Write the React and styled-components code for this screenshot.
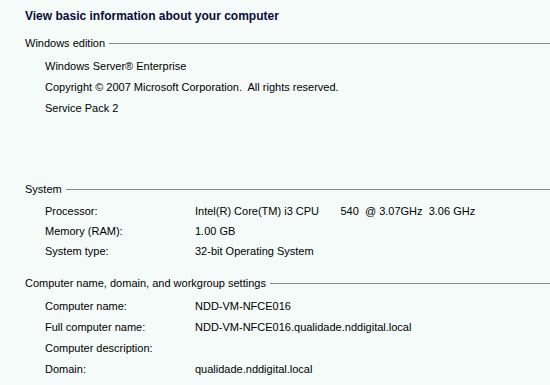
import React from 'react';
import styled, { createGlobalStyle } from 'styled-components';

const GlobalStyle = createGlobalStyle`
  html, body {
    margin: 0;
    padding: 0;
    background: #f5fbf9;
  }
  body {
    font-family: Tahoma, "Liberation Sans", Arial, sans-serif;
    font-size: 11px;
    color: #000;
  }
`;

const Page = styled.div`
  width: 550px;
  height: 385px;
  overflow: hidden;
  padding: 8px 0 0 25px;
  box-sizing: border-box;
`;

const Title = styled.h1`
  margin: 0 0 9px;
  font-size: 12px;
  line-height: 16px;
  font-weight: bold;
  color: #0a0a3c;
`;

const Section = styled.section`
  margin-bottom: ${(p) => p.$gap || '9px'};
  min-height: ${(p) => p.$minHeight || 'auto'};
`;

const Heading = styled.div`
  display: flex;
  align-items: center;
  height: 20px;
  line-height: 20px;
  white-space: nowrap;

  &::after {
    content: '';
    flex: 1;
    height: 1px;
    margin-left: 4px;
    background: #8a8a8a;
  }
`;

const Rows = styled.div`
  padding: 2px 0 0 20px;
  display: grid;
  grid-template-columns: 150px 1fr;
  grid-auto-rows: ${(p) => p.$rowHeight || '21px'};
  align-items: center;
`;

const Label = styled.div`
  white-space: nowrap;
`;

const Value = styled.div`
  white-space: pre;
`;

const Line = styled.div`
  grid-column: 1 / -1;
  white-space: pre;
`;

const system = [
  ['Processor:', 'Intel(R) Core(TM) i3 CPU       540  @ 3.07GHz  3.06 GHz'],
  ['Memory (RAM):', '1.00 GB'],
  ['System type:', '32-bit Operating System'],
];

const naming = [
  ['Computer name:', 'NDD-VM-NFCE016'],
  ['Full computer name:', 'NDD-VM-NFCE016.qualidade.nddigital.local'],
  ['Computer description:', ''],
  ['Domain:', 'qualidade.nddigital.local'],
];

export default function App() {
  return (
    <>
      <GlobalStyle />
      <Page>
        <Title>View basic information about your computer</Title>

        <Section $minHeight="137px">
          <Heading>Windows edition</Heading>
          <Rows>
            <Line>Windows Server® Enterprise</Line>
            <Line>Copyright © 2007 Microsoft Corporation.  All rights reserved.</Line>
            <Line>Service Pack 2</Line>
          </Rows>
        </Section>

        <Section $gap="12px">
          <Heading>System</Heading>
          <Rows $rowHeight="20px">
            {system.map(([k, v]) => (
              <React.Fragment key={k}>
                <Label>{k}</Label>
                <Value>{v}</Value>
              </React.Fragment>
            ))}
          </Rows>
        </Section>

        <Section>
          <Heading>Computer name, domain, and workgroup settings</Heading>
          <Rows>
            {naming.map(([k, v]) => (
              <React.Fragment key={k}>
                <Label>{k}</Label>
                <Value>{v}</Value>
              </React.Fragment>
            ))}
          </Rows>
        </Section>
      </Page>
    </>
  );
}
